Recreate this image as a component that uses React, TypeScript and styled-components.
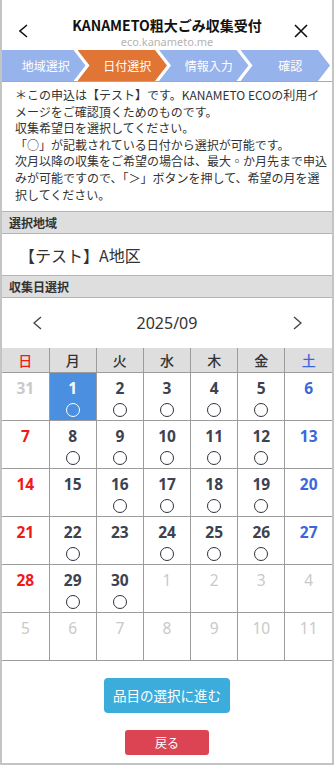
import React from "react";
import styled, { createGlobalStyle, css } from "styled-components";

const GlobalStyle = createGlobalStyle`
  html, body {
    margin: 0;
    padding: 0;
    background: #fff;
  }
  body {
    font-family: "Noto Sans CJK JP", "Noto Sans", sans-serif;
    color: #333;
  }
  * {
    box-sizing: border-box;
  }
`;

const Frame = styled.div`
  width: 334px;
  height: 765px;
  border: 2px solid #c4c4c4;
  border-top: none;
  display: flex;
  flex-direction: column;
  overflow: hidden;
  background: #fff;
`;

const Header = styled.header`
  height: 50px;
  display: grid;
  grid-template-columns: 40px 1fr 40px;
  align-items: start;
`;

const IconButton = styled.button<{ $right?: boolean }>`
  border: none;
  background: none;
  padding: 0;
  margin-top: 22px;
  height: 17px;
  display: flex;
  align-items: center;
  justify-content: ${({ $right }) => ($right ? "flex-start" : "flex-end")};
  padding-right: ${({ $right }) => ($right ? "0" : "14px")};
  padding-left: ${({ $right }) => ($right ? "2px" : "0")};
`;

const TitleBlock = styled.div`
  display: flex;
  flex-direction: column;
  align-items: center;
  padding-top: 16px;
`;

const Title = styled.h1`
  margin: 0;
  font-size: 14px;
  line-height: 18px;
  font-weight: 700;
  color: #111;
`;

const SubTitle = styled.div`
  margin-top: 2px;
  font-family: "Noto Sans", sans-serif;
  font-size: 11px;
  line-height: 12px;
  color: #b4b4b4;
`;

const Steps = styled.nav`
  display: flex;
  height: 32px;
  border-bottom: 1px solid #a8a8a8;
  padding-right: 2px;
`;

const Step = styled.div<{ $active?: boolean; $first?: boolean }>`
  flex: 1;
  display: flex;
  align-items: center;
  justify-content: center;
  color: #fff;
  font-size: 12px;
  background: ${({ $active }) => ($active ? "#e07535" : "#97b3ec")};
  ${({ $first }) =>
    $first
      ? css`
          padding-left: 4px;
          clip-path: polygon(0 0, calc(100% - 12px) 0, 100% 50%, calc(100% - 12px) 100%, 0 100%);
        `
      : css`
          margin-left: -8px;
          padding-left: 10px;
          clip-path: polygon(0 0, calc(100% - 12px) 0, 100% 50%, calc(100% - 12px) 100%, 0 100%, 12px 50%);
        `}
`;

const Notice = styled.div`
  padding: 5px 3px 8px 13px;
  font-size: 12px;
  line-height: 16.6px;
  color: #333;
`;

const SectionHead = styled.div`
  height: 23px;
  background: #dedede;
  border-top: 1px solid #b4b4b4;
  border-bottom: 1px solid #b4b4b4;
  font-size: 12px;
  font-weight: 700;
  color: #333;
  padding-left: 7px;
  display: flex;
  align-items: center;
`;

const AreaValue = styled.div`
  height: 41px;
  display: flex;
  align-items: center;
  padding-left: 17px;
  font-size: 16px;
  color: #333;
`;

const MonthNav = styled.div`
  height: 50px;
  display: grid;
  grid-template-columns: 70px 1fr 70px;
  align-items: center;
  justify-items: center;
`;

const MonthLabel = styled.div`
  font-family: "Noto Sans", sans-serif;
  font-size: 16px;
  color: #333;
`;

const CalTable = styled.table`
  width: 100%;
  border-collapse: collapse;
  table-layout: fixed;
  border-style: hidden;
  border-bottom: 1px solid #9c9c9c;
`;

const DayHead = styled.th<{ $tone: string }>`
  height: 24px;
  background: #dedede;
  border: 1px solid #9c9c9c;
  font-size: 14px;
  font-weight: 500;
  color: ${({ $tone }) => $tone};
  padding: 0;
`;

const DayCell = styled.td<{ $selected?: boolean }>`
  height: 48px;
  border: 1px solid #9c9c9c;
  padding: 0;
  vertical-align: top;
  text-align: center;
  background: ${({ $selected }) => ($selected ? "#4a8fe0" : "#fff")};
`;

const DayNum = styled.div<{ $tone: string; $muted?: boolean }>`
  font-family: "Noto Sans", sans-serif;
  font-size: 15.5px;
  font-weight: ${({ $muted }) => ($muted ? 400 : 700)};
  line-height: 20px;
  margin-top: 5px;
  color: ${({ $tone }) => $tone};
`;

/* availability marker: the "○" of the notice, drawn as a ring */
const Mark = styled.span<{ $selected?: boolean }>`
  display: block;
  width: 14px;
  height: 14px;
  margin: 5px auto 0;
  border-radius: 50%;
  border: 1.8px solid ${({ $selected }) => ($selected ? "#fff" : "#2f333b")};
`;

const Actions = styled.div`
  flex: 1;
  display: flex;
  flex-direction: column;
  align-items: center;
  padding-top: 17px;
  gap: 17px;
`;

const Button = styled.button<{ $variant: "primary" | "danger" }>`
  border: none;
  color: #fff;
  font-family: "Noto Sans CJK JP", sans-serif;
  ${({ $variant }) =>
    $variant === "primary"
      ? css`
          width: 126px;
          height: 35px;
          background: #3caddb;
          border-radius: 4px;
          font-size: 13.5px;
        `
      : css`
          width: 84px;
          height: 25px;
          background: #dc4454;
          border-radius: 3px;
          font-size: 12px;
        `}
`;

const Chevron = ({ dir, color, w, h, stroke }: { dir: "left" | "right"; color: string; w: number; h: number; stroke: number }) => (
  <svg width={w} height={h} viewBox={`0 0 ${w} ${h}`}>
    <polyline
      points={dir === "left" ? `${w - 1},1 1,${h / 2} ${w - 1},${h - 1}` : `1,1 ${w - 1},${h / 2} 1,${h - 1}`}
      fill="none"
      stroke={color}
      strokeWidth={stroke}
    />
  </svg>
);

const CloseIcon = () => (
  <svg width="14" height="14" viewBox="0 0 14 14">
    <path d="M1 1 L13 13 M13 1 L1 13" stroke="#111" strokeWidth="1.6" fill="none" />
  </svg>
);

const RED = "#f01a1a";
const BLUE = "#3b67dc";
const DARK = "#3c4250";
const MUTED = "#c9c9c9";

type Day = { n: number; cur: boolean; ok?: boolean };

const available = [1, 2, 3, 4, 5, 8, 9, 10, 11, 12, 16, 17, 18, 19, 22, 24, 25, 26, 29, 30];

const buildWeeks = (): Day[][] => {
  const days: Day[] = [{ n: 31, cur: false }];
  for (let i = 1; i <= 30; i++) days.push({ n: i, cur: true, ok: available.includes(i) });
  for (let i = 1; i <= 11; i++) days.push({ n: i, cur: false });
  const weeks: Day[][] = [];
  for (let i = 0; i < days.length; i += 7) weeks.push(days.slice(i, i + 7));
  return weeks;
};

const weekdays = ["日", "月", "火", "水", "木", "金", "土"];

const toneFor = (col: number) => (col === 0 ? RED : col === 6 ? BLUE : DARK);

const App = () => {
  const weeks = buildWeeks();
  return (
    <>
      <GlobalStyle />
      <Frame>
        <Header>
          <IconButton aria-label="戻る">
            <Chevron dir="left" color="#111" w={9} h={14} stroke={1.5} />
          </IconButton>
          <TitleBlock>
            <Title>KANAMETO粗大ごみ収集受付</Title>
            <SubTitle>eco.kanameto.me</SubTitle>
          </TitleBlock>
          <IconButton $right aria-label="閉じる">
            <CloseIcon />
          </IconButton>
        </Header>

        <Steps>
          <Step $first>地域選択</Step>
          <Step $active>日付選択</Step>
          <Step>情報入力</Step>
          <Step>確認</Step>
        </Steps>

        <Notice>
          ＊この申込は【テスト】です。KANAMETO ECOの利用イメージをご確認頂くためのものです。
          <br />
          収集希望日を選択してください。
          <br />
          「○」が記載されている日付から選択が可能です。
          <br />
          次月以降の収集をご希望の場合は、最大◦か月先まで申込みが可能ですので、「＞」ボタンを押して、希望の月を選択してください。
        </Notice>

        <SectionHead>選択地域</SectionHead>
        <AreaValue>【テスト】A地区</AreaValue>
        <SectionHead>収集日選択</SectionHead>

        <MonthNav>
          <Chevron dir="left" color="#444" w={9} h={14} stroke={1.4} />
          <MonthLabel>2025/09</MonthLabel>
          <Chevron dir="right" color="#444" w={9} h={14} stroke={1.4} />
        </MonthNav>

        <CalTable>
          <thead>
            <tr>
              {weekdays.map((d, i) => (
                <DayHead key={d} $tone={i === 0 ? RED : i === 6 ? BLUE : "#333"}>
                  {d}
                </DayHead>
              ))}
            </tr>
          </thead>
          <tbody>
            {weeks.map((week, wi) => (
              <tr key={wi}>
                {week.map((day, ci) => {
                  const selected = day.cur && day.n === 1;
                  const tone = selected ? "#fff" : day.cur ? toneFor(ci) : MUTED;
                  return (
                    <DayCell key={ci} $selected={selected}>
                      <DayNum $tone={tone} $muted={!day.cur && wi > 0}>
                        {day.n}
                      </DayNum>
                      {day.ok && <Mark $selected={selected} aria-label="○" />}
                    </DayCell>
                  );
                })}
              </tr>
            ))}
          </tbody>
        </CalTable>

        <Actions>
          <Button $variant="primary">品目の選択に進む</Button>
          <Button $variant="danger">戻る</Button>
        </Actions>
      </Frame>
    </>
  );
};

export default App;
